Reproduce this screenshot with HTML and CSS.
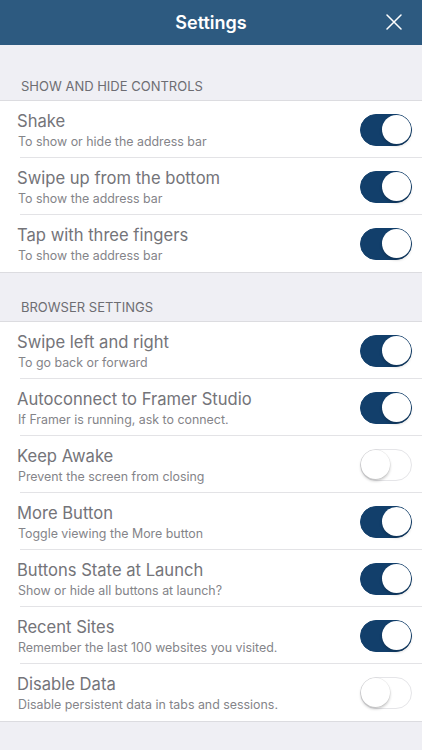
FILE: index.html
```html
<!DOCTYPE html>
<html>
<head>
<meta charset="utf-8">
<link rel="stylesheet" href="styles.css">
</head>
<body>
<div class="screen">
  <header class="navbar">
    <div class="nav-title">Settings</div>
    <button class="nav-close" aria-label="Close">
      <svg width="16" height="16" viewBox="0 0 16 16"><path d="M1 1L15 15M15 1L1 15" stroke="#fff" stroke-width="1.5" stroke-linecap="round"/></svg>
    </button>
  </header>

  <div class="section-head first">SHOW AND HIDE CONTROLS</div>
  <ul class="group">
    <li class="row"><div class="text"><div class="title">Shake</div><div class="sub">To show or hide the address bar</div></div><span class="toggle on"></span></li>
    <li class="row"><div class="text"><div class="title">Swipe up from the bottom</div><div class="sub">To show the address bar</div></div><span class="toggle on"></span></li>
    <li class="row"><div class="text"><div class="title">Tap with three fingers</div><div class="sub">To show the address bar</div></div><span class="toggle on"></span></li>
  </ul>

  <div class="section-head">BROWSER SETTINGS</div>
  <ul class="group">
    <li class="row"><div class="text"><div class="title">Swipe left and right</div><div class="sub">To go back or forward</div></div><span class="toggle on"></span></li>
    <li class="row"><div class="text"><div class="title">Autoconnect to Framer Studio</div><div class="sub">If Framer is running, ask to connect.</div></div><span class="toggle on"></span></li>
    <li class="row"><div class="text"><div class="title">Keep Awake</div><div class="sub">Prevent the screen from closing</div></div><span class="toggle"></span></li>
    <li class="row"><div class="text"><div class="title">More Button</div><div class="sub">Toggle viewing the More button</div></div><span class="toggle on"></span></li>
    <li class="row"><div class="text"><div class="title">Buttons State at Launch</div><div class="sub">Show or hide all buttons at launch?</div></div><span class="toggle on"></span></li>
    <li class="row"><div class="text"><div class="title">Recent Sites</div><div class="sub">Remember the last 100 websites you visited.</div></div><span class="toggle on"></span></li>
    <li class="row"><div class="text"><div class="title">Disable Data</div><div class="sub">Disable persistent data in tabs and sessions.</div></div><span class="toggle"></span></li>
  </ul>
</div>
</body>
</html>
```

FILE: styles.css
```css
* { box-sizing: border-box; }
html, body { margin: 0; padding: 0; }
body {
  background: #efeff4;
  font-family: Inter, "Noto Sans", sans-serif;
  -webkit-font-smoothing: antialiased;
}
.screen {
  width: 422px;
  height: 750px;
  overflow: hidden;
  background: #efeff4;
}
.navbar {
  height: 45px;
  background: #2d5a80;
  display: flex;
  align-items: center;
  justify-content: center;
  position: relative;
}
.nav-title {
  color: #fff;
  font-size: 18px;
  font-weight: 600;
}
.nav-close {
  position: absolute;
  right: 20px;
  top: 14px;
  padding: 0;
  border: 0;
  background: none;
  width: 16px;
  height: 16px;
  display: flex;
}
.section-head {
  padding: 25px 0 5px 21px;
  font-size: 13px;
  color: #6d6d72;
  line-height: 18px;
  font-weight: 400;
}
.section-head.first { padding-top: 32px; }
.group {
  list-style: none;
  margin: 0;
  padding: 0;
  background: #fff;
  border-top: 1px solid #dcdce0;
  border-bottom: 1px solid #dcdce0;
}
.row {
  height: 57px;
  display: flex;
  align-items: center;
  justify-content: space-between;
  padding: 0 10px 0 17px;
  position: relative;
}
.row + .row::before {
  content: "";
  position: absolute;
  left: 20px;
  right: 0;
  top: -1px;
  height: 1px;
  background: #e3e3e6;
}
.text {
  display: flex;
  flex-direction: column;
  padding-top: 1px;
}
.title {
  font-size: 16.6px;
  color: #747479;
  line-height: 20px;
  font-weight: 400;
}
.sub {
  font-size: 12.4px;
  color: #848489;
  line-height: 16px;
  margin-top: 3px;
  margin-left: 1px;
}
.toggle {
  width: 52px;
  height: 32px;
  border-radius: 16px;
  position: relative;
  background: #fff;
  border: 1.5px solid #e5e5e8;
  flex: none;
}
.toggle::after {
  content: "";
  position: absolute;
  top: 0;
  left: 0;
  width: 29px;
  height: 29px;
  border-radius: 50%;
  background: #fff;
  box-shadow: 0 2px 3px rgba(0,0,0,0.22), 0 0 0 0.5px rgba(0,0,0,0.08);
}
.toggle.on {
  background: #123f6b;
  border-color: #123f6b;
}
.toggle.on::after {
  left: auto;
  right: 0;
  box-shadow: 0 2px 3px rgba(0,0,0,0.2);
}
```
